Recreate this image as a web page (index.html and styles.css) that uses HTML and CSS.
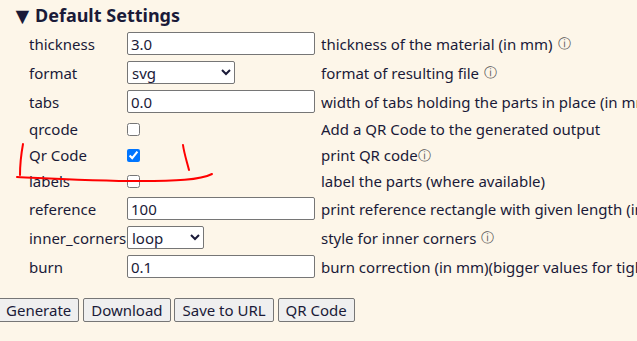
FILE: index.html
```html
<!DOCTYPE html>
<html>
<head>
<meta charset="utf-8">
<link rel="stylesheet" href="styles.css">
</head>
<body>
<div class="page">
  <div class="summary"><span class="tri">▼</span><span class="title">Default Settings</span></div>
  <div class="grid">
    <div class="lbl in">thickness</div><div class="ctl in"><input class="txt" type="text" value="3.0"></div><div class="desc in">thickness of the material (in mm)<span class="info sp">ⓘ</span></div>
    <div class="lbl in">format</div><div class="ctl in"><select class="sel sel-format"><option>svg</option></select></div><div class="desc in">format of resulting file<span class="info sp">ⓘ</span></div>
    <div class="lbl in">tabs</div><div class="ctl in"><input class="txt" type="text" value="0.0"></div><div class="desc in">width of tabs holding the parts in place (in mm)</div>
    <div class="lbl cb">qrcode</div><div class="ctl cb"><input class="chk" type="checkbox"></div><div class="desc cb">Add a QR Code to the generated output</div>
    <div class="lbl cb">Qr Code</div><div class="ctl cb"><input class="chk" type="checkbox" checked></div><div class="desc cb">print QR code<span class="info">ⓘ</span></div>
    <div class="lbl cb">labels</div><div class="ctl cb"><input class="chk" type="checkbox"></div><div class="desc cb">label the parts (where available)</div>
    <div class="lbl in">reference</div><div class="ctl in"><input class="txt" type="text" value="100"></div><div class="desc in">print reference rectangle with given length (in</div>
    <div class="lbl in">inner_corners</div><div class="ctl in"><select class="sel sel-corners"><option>loop</option></select></div><div class="desc in">style for inner corners<span class="info sp">ⓘ</span></div>
    <div class="lbl in">burn</div><div class="ctl in"><input class="txt" type="text" value="0.1"></div><div class="desc in">burn correction (in mm)(bigger values for tight</div>
  </div>
  <div class="buttons">
    <button class="btn">Generate</button>
    <button class="btn">Download</button>
    <button class="btn">Save to URL</button>
    <button class="btn">QR Code</button>
  </div>
</div>
<svg class="marks" width="637" height="341" viewBox="0 0 637 341">
  <path d="M23 144 C21 155 20 165 20 175" />
  <path d="M17 177 C60 179 100 181 140 181 C175 181 200 180 212 174" />
  <path d="M183 145 C184 153 187 162 189 170" />
</svg>
</body>
</html>
```
FILE: styles.css
```css
html, body {
  margin: 0;
  padding: 0;
  background: #fdf6e9;
}
body {
  width: 637px;
  height: 341px;
  overflow: hidden;
  position: relative;
  font-family: "Noto Sans", "Open Sans", sans-serif;
  font-size: 15px;
  color: #1a1a38;
}
.summary {
  height: 29px;
  padding-left: 11px;
  display: flex;
  align-items: center;
  white-space: nowrap;
}
.tri {
  font-size: 23px;
  line-height: 24px;
  width: 24px;
}
.title {
  font-size: 18px;
  font-weight: bold;
  line-height: 24px;
}
.grid {
  display: grid;
  grid-template-columns: 127px 194px 1fr;
  white-space: nowrap;
}
.grid > div {
  display: flex;
  align-items: center;
  overflow: hidden;
}
.in { height: 29px; }
.cb { height: 26px; }
.lbl { padding-left: 29px; }
.txt {
  box-sizing: border-box;
  width: 188px;
  height: 23px;
  margin: 0;
  padding: 1px 3px;
  border: 1px solid #767676;
  border-radius: 2px;
  background: #fff;
  font: inherit;
  color: inherit;
}
.sel {
  box-sizing: border-box;
  height: 23px;
  margin: 0;
  border: 1px solid #767676;
  border-radius: 2px;
  background: #fff;
  font: inherit;
  color: inherit;
}
.sel-format { width: 108px; }
.sel-corners { width: 77px; }
.chk {
  width: 13px;
  height: 13px;
  margin: 0;
  accent-color: #0075ff;
}
.info {
  color: #555;
  font-size: 13px;
}
.info.sp { margin-left: 5px; }
.buttons {
  margin-top: 17px;
  margin-left: -2px;
  white-space: nowrap;
}
.btn {
  height: 24px;
  margin: 0;
  padding: 0 7px;
  border: 1px solid #767676;
  border-radius: 2px;
  background: #efefef;
  font: inherit;
  color: inherit;
  line-height: 20px;
}
.marks {
  position: absolute;
  left: 0;
  top: 0;
  pointer-events: none;
}
.marks path {
  fill: none;
  stroke: #f00;
  stroke-width: 2;
  stroke-linecap: round;
}
```
